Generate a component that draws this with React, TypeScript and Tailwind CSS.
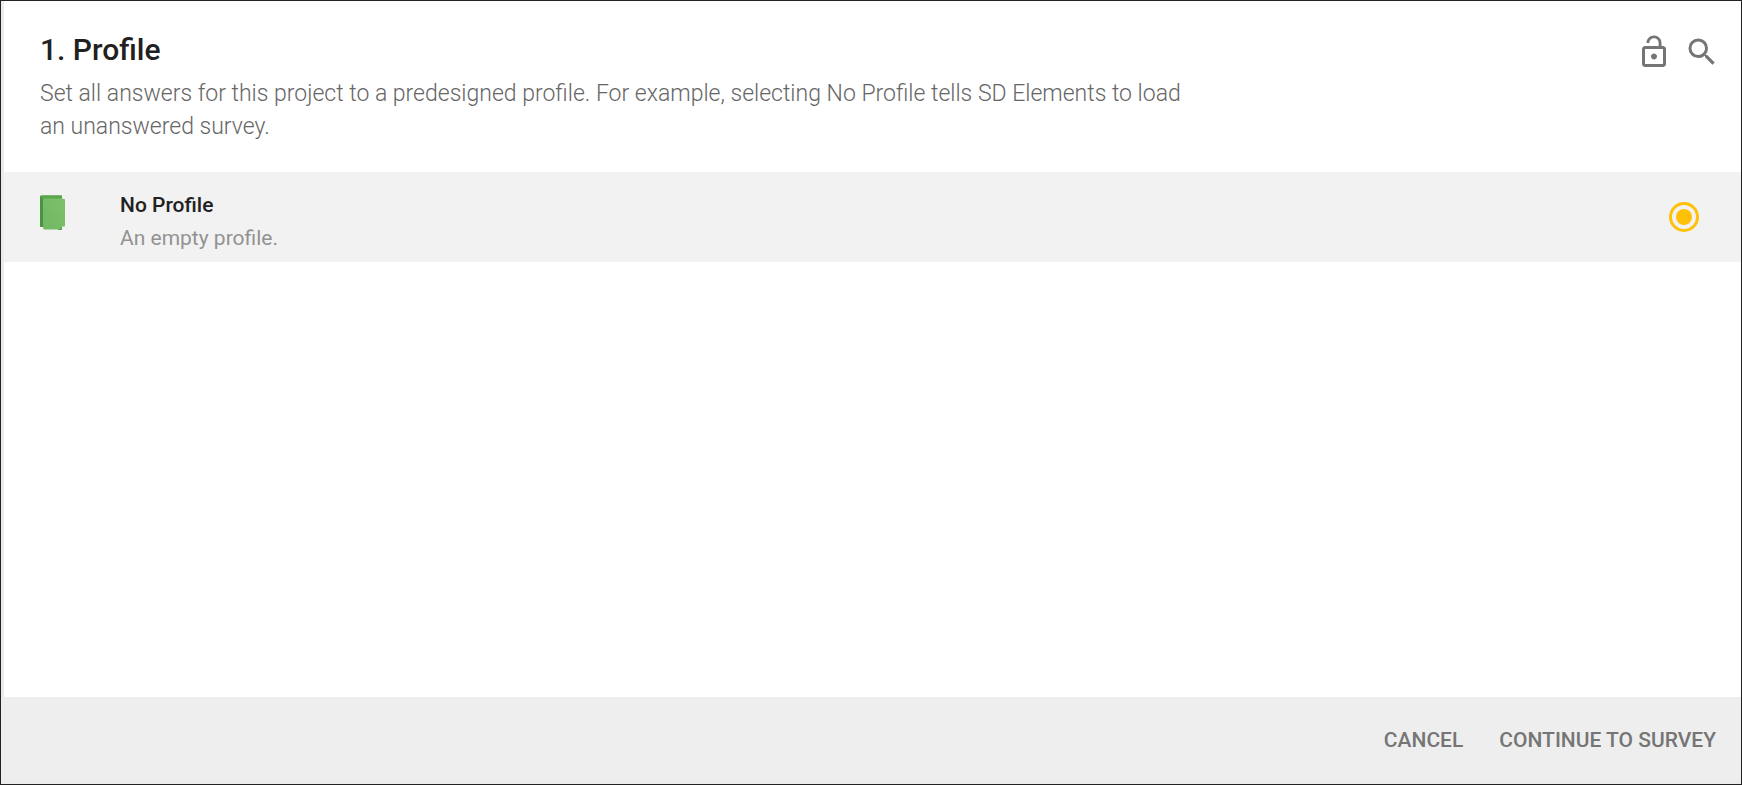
import { useState } from "react";

function LockOpenIcon() {
  return (
    <svg viewBox="0 0 24 24" className="size-9 fill-current" aria-hidden="true">
      <path d="M12 17c1.1 0 2-.9 2-2s-.9-2-2-2-2 .9-2 2 .9 2 2 2zm6-9h-1V6c0-2.76-2.24-5-5-5S7 3.24 7 6h1.9c0-1.71 1.39-3.1 3.1-3.1 1.71 0 3.1 1.39 3.1 3.1v2H6c-1.1 0-2 .9-2 2v10c0 1.1.9 2 2 2h12c1.1 0 2-.9 2-2V10c0-1.1-.9-2-2-2zm0 12H6V10h12v10z" />
    </svg>
  );
}

function SearchIcon() {
  return (
    <svg viewBox="0 0 24 24" className="size-9 fill-current" aria-hidden="true">
      <path d="M15.5 14h-.79l-.28-.27A6.471 6.471 0 0 0 16 9.5 6.5 6.5 0 1 0 9.5 16c1.61 0 3.09-.59 4.23-1.57l.27.28v.79l5 4.99L20.49 19l-4.99-5zm-6 0C7.01 14 5 11.99 5 9.5S7.01 5 9.5 5 14 7.01 14 9.5 11.99 14 9.5 14z" />
    </svg>
  );
}

function ProfileIcon() {
  return (
    <svg viewBox="0 0 26 36" className="mt-[23px] h-9 w-[26px] shrink-0" aria-hidden="true">
      <defs>
        <linearGradient id="cover" x1="0" x2="1" y1="1" y2="0">
          <stop offset="0" stopColor="#71b761" />
          <stop offset="1" stopColor="#7cc26c" />
        </linearGradient>
      </defs>
      <path d="M1 .5h20.500L22 1v33.500l-1 .5H18V32H.5L0 31.500V1.500z" fill="#4a9345" />
      <path d="M1 .5h20.500L22 1v3H3L0 1.500z" fill="#59a74b" />
      <path d="M4 3.500h17.500l3 .5.500.500V31l-.5.500H22.500L20 34.500H4l-.5-.5-.5-2V4.500z" fill="url(#cover)" />
    </svg>
  );
}

export default function App() {
  const [profile, setProfile] = useState("none");
  return (
    <div className="flex min-h-screen flex-col border border-[#222222] bg-[#ebebee] pb-[3px] font-['Roboto',sans-serif]">
      <main className="ml-[3px] flex-1 bg-white">
        <header className="flex items-start justify-between pt-[31px] pr-[21px] pb-[29px] pl-9">
          <div className="max-w-[1150px]">
            <h1 className="text-[30px] leading-9 font-medium text-[#212121]">1. Profile</h1>
            <p className="mt-[9px] text-[23px] leading-[33px] font-light text-[#666666]">
              Set all answers for this project to a predesigned profile. For example, selecting No
              Profile tells SD Elements to load an unanswered survey.
            </p>
          </div>
          <div className="mt-[2px] flex gap-3 text-[#757575]">
            <button type="button" aria-label="Unlock">
              <LockOpenIcon />
            </button>
            <button type="button" aria-label="Search">
              <SearchIcon />
            </button>
          </div>
        </header>
        <label className="flex h-[90px] items-start bg-[#f2f2f2] pr-[42px] pl-9">
          <ProfileIcon />
          <span className="mt-[17px] ml-[54px] flex-1 text-[21px] leading-[33px]">
            <span className="block font-medium text-[#212121]">No Profile</span>
            <span className="block text-[#929292]">An empty profile.</span>
          </span>
          <input
            type="radio"
            name="profile"
            value="none"
            checked={profile === "none"}
            onChange={(e) => setProfile(e.target.value)}
            className="grid size-[30px] appearance-none place-items-center self-center rounded-full border-3 border-[#ffc107] before:size-4 before:rounded-full checked:before:bg-[#ffc107]"
          />
        </label>
      </main>
      <footer className="flex items-center justify-end gap-9 bg-[#eeeeee] pt-[27px] pr-[25px] pb-[25px] text-[21px] leading-8 font-medium text-[#757575]">
        <button type="button">CANCEL</button>
        <button type="button">CONTINUE TO SURVEY</button>
      </footer>
    </div>
  );
}
